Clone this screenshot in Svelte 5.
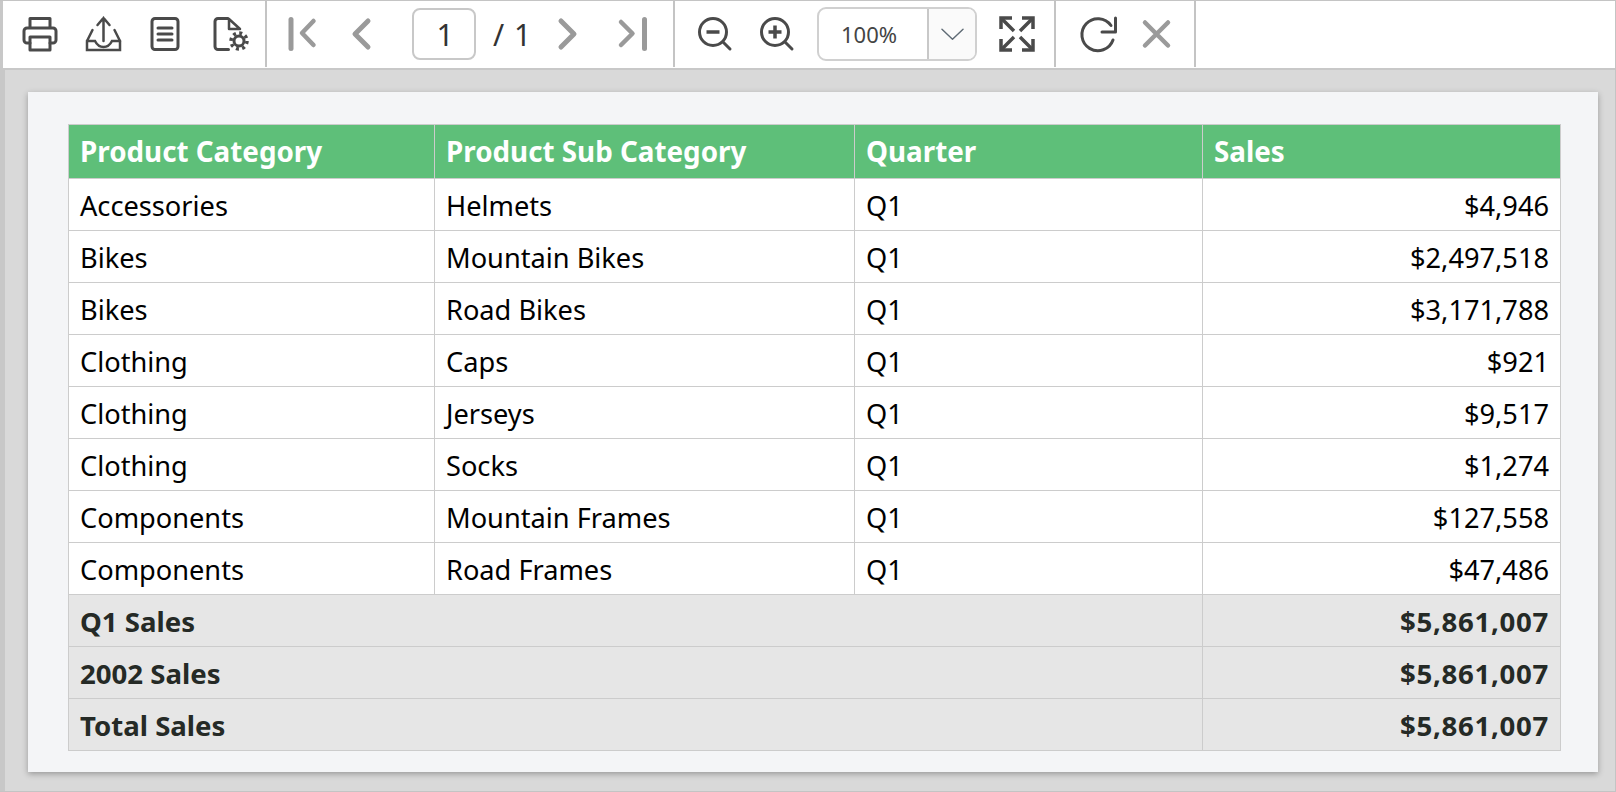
<script>
    const rows = [
        ["Accessories", "Helmets", "Q1", "$4,946"],
        ["Bikes", "Mountain Bikes", "Q1", "$2,497,518"],
        ["Bikes", "Road Bikes", "Q1", "$3,171,788"],
        ["Clothing", "Caps", "Q1", "$921"],
        ["Clothing", "Jerseys", "Q1", "$9,517"],
        ["Clothing", "Socks", "Q1", "$1,274"],
        ["Components", "Mountain Frames", "Q1", "$127,558"],
        ["Components", "Road Frames", "Q1", "$47,486"]
    ];
    const totals = ["Q1 Sales", "2002 Sales", "Total Sales"];
</script>

<div class="viewer">
    <div class="toolbar">
        <div class="group first">
            <button class="tool" aria-label="Print">
                <svg viewBox="0 0 36 36">
                    <path d="M8 12V2.500h20V12M8 27H5a3 3 0 0 1-3-3V15a3 3 0 0 1 3-3h26a3 3 0 0 1 3 3v9a3 3 0 0 1-3 3h-3" />
                    <rect x="8" y="21" width="20" height="13" />
                </svg>
            </button>
            <button class="tool" aria-label="Export">
                <svg viewBox="0 0 36 36" class="thin">
                    <path d="M3 25L8.500 14M36 25L30.500 14M3 25v9h33v-9" />
                    <path d="M3 25h8c2 4 4 6 8.500 6s6.500-2 8.500-6h8" />
                    <path d="M19.500 25V2M13.500 9l6-7 6 7" />
                </svg>
            </button>
            <button class="tool" aria-label="Page setup">
                <svg viewBox="0 0 36 36">
                    <rect x="6" y="2.500" width="26" height="31" rx="3" />
                    <path d="M12 12h14M12 18h14M12 24h14" />
                </svg>
            </button>
            <button class="tool" aria-label="Parameters">
                <svg viewBox="0 0 36 36">
                    <path d="M20 2.500H10a3 3 0 0 0-3 3v25a3 3 0 0 0 3 3h10.500" />
                    <path d="M21 3v10h11z" class="fine" />
                    <circle cx="31" cy="25" r="5" />
                    <circle cx="31" cy="25" r="8" class="teeth" />
                </svg>
            </button>
        </div>

        <div class="group pager">
            <button class="tool muted" aria-label="First page">
                <svg viewBox="0 0 36 36">
                    <path d="M8 3.500v29" class="heavy" />
                    <path d="M30.500 5L19 17l11.500 12" class="mid" />
                </svg>
            </button>
            <button class="tool muted" aria-label="Previous page">
                <svg viewBox="0 0 36 36"><path d="M23 5L10 18l13 13" class="heavy" /></svg>
            </button>
            <div class="page-input">1</div>
            <span class="page-count">/ 1</span>
            <button class="tool muted" aria-label="Next page">
                <svg viewBox="0 0 36 36"><path d="M12 5l13 13-13 13" class="heavy" /></svg>
            </button>
            <button class="tool muted" aria-label="Last page">
                <svg viewBox="0 0 36 36">
                    <path d="M33.500 3.500v29" class="heavy" />
                    <path d="M10 6l11.500 11.500L10 29" class="mid" />
                </svg>
            </button>
        </div>

        <div class="group zoom">
            <button class="tool" aria-label="Zoom out">
                <svg viewBox="0 0 36 36">
                    <circle cx="17" cy="16" r="13.500" />
                    <path d="M27 26l7 7" />
                    <path d="M10.500 16h13" class="bar" />
                </svg>
            </button>
            <button class="tool" aria-label="Zoom in">
                <svg viewBox="0 0 36 36">
                    <circle cx="17" cy="16" r="13.500" />
                    <path d="M27 26l7 7" />
                    <path d="M10.500 16h13M17 9.500v13" class="bar" />
                </svg>
            </button>
            <div class="combo">
                <span class="combo-value">100%</span>
                <span class="combo-arrow">
                    <svg viewBox="0 0 24 12"><path d="M1 1l11 10.500L23 1" /></svg>
                </span>
            </div>
            <button class="tool" aria-label="Fit page">
                <svg viewBox="0 0 36 36" class="solid">
                    <path d="M2 13V2h11M23 2h11v11M34 23v11H23M13 34H2V23" />
                    <path d="M3 3l12 12M33 3L21 15M33 33L21 21M3 33l12-12" />
                </svg>
            </button>
        </div>

        <div class="group actions">
            <button class="tool" aria-label="Refresh">
                <svg viewBox="0 0 36 36">
                    <path d="M31 9.500A16 16 0 1 0 33 24" />
                    <path d="M35.500 2v14H22" />
                </svg>
            </button>
            <button class="tool muted" aria-label="Close">
                <svg viewBox="0 0 36 36"><path d="M3 6.500l23 23M26 6.500l-23 23" class="mid" /></svg>
            </button>
        </div>
    </div>

    <div class="content">
        <div class="card">
            <table>
                <colgroup>
                    <col class="c1" />
                    <col class="c2" />
                    <col class="c3" />
                    <col />
                </colgroup>
                <thead>
                    <tr>
                        <th>Product Category</th>
                        <th>Product Sub Category</th>
                        <th>Quarter</th>
                        <th>Sales</th>
                    </tr>
                </thead>
                <tbody>
                    {#each rows as row}
                        <tr>
                            <td>{row[0]}</td>
                            <td>{row[1]}</td>
                            <td>{row[2]}</td>
                            <td class="num">{row[3]}</td>
                        </tr>
                    {/each}
                    {#each totals as label}
                        <tr class="total">
                            <td colspan="3">{label}</td>
                            <td class="num">$5,861,007</td>
                        </tr>
                    {/each}
                </tbody>
            </table>
        </div>
    </div>
</div>

<style>
    :global(body) {
        margin: 0;
        background: #d9d9d9;
    }

    .viewer {
        width: 1616px;
        height: 792px;
        box-sizing: border-box;
        display: flex;
        flex-direction: column;
        border-top: 1px solid #c4c4c4;
        border-right: 1px solid #c4c4c4;
        border-bottom: 1px solid #c4c4c4;
        font-family: "Noto Sans", "Open Sans", sans-serif;
    }

    .toolbar {
        display: flex;
        background: #fff;
        border-left: 3px solid #c8c8c8;
        border-bottom: 2px solid #c8c8c8;
        padding-bottom: 1px;
    }

    .group {
        height: 66px;
        display: flex;
        align-items: center;
        box-sizing: border-box;
        border-right: 2px solid #c4c4c4;
    }

    .first { width: 264px; padding-left: 6px; }
    .pager { width: 408px; padding-left: 3px; }
    .zoom { width: 381px; padding-left: 8px; }
    .actions { width: 140px; padding-left: 11px; }

    .tool {
        width: 62px;
        height: 36px;
        flex: none;
        padding: 0;
        border: 0;
        background: none;
        display: flex;
        justify-content: center;
        color: #4a4a4a;
    }

    .tool.muted { color: #9a9a9a; }

    svg {
        width: 36px;
        height: 36px;
        overflow: visible;
        fill: none;
        stroke: currentColor;
        stroke-width: 3;
        stroke-linecap: round;
        stroke-linejoin: round;
    }

    .thin { stroke-width: 2.5; stroke-linejoin: miter; }
    .solid { stroke-width: 3.5; stroke-linecap: butt; stroke-linejoin: miter; }
    .fine { stroke-width: 2.5; }
    .bar { stroke-width: 3.5; stroke-linecap: butt; }
    .heavy { stroke-width: 5; }
    .mid { stroke-width: 4.5; }
    .teeth { stroke-width: 3.5; stroke-dasharray: 3 3.28; stroke-linecap: butt; }

    .page-input {
        width: 64px;
        height: 52px;
        box-sizing: border-box;
        margin-left: 18px;
        padding-left: 2px;
        border: 2px solid #c8c8c8;
        border-radius: 8px;
        display: flex;
        align-items: center;
        justify-content: center;
        font-size: 30px;
        color: #333;
    }

    .page-count {
        width: 60px;
        padding-left: 17px;
        box-sizing: border-box;
        font-size: 30px;
        word-spacing: 2px;
        color: #333;
        white-space: nowrap;
    }

    .combo {
        width: 160px;
        height: 54px;
        flex: none;
        box-sizing: border-box;
        margin: 0 9px 0 10px;
        border: 2px solid #d0d0d0;
        border-radius: 9px;
        display: flex;
        overflow: hidden;
    }

    .combo-value {
        width: 108px;
        padding-left: 22px;
        box-sizing: border-box;
        line-height: 50px;
        font-size: 22px;
        color: #444;
    }

    .combo-arrow {
        flex: 1;
        border-left: 2px solid #c8c8c8;
        background: #fafafa;
        display: flex;
        align-items: center;
        justify-content: center;
    }

    .combo-arrow svg {
        width: 23px;
        height: 12px;
        stroke: #5f6b75;
        stroke-width: 1.5;
    }

    .content {
        flex: 1;
        box-sizing: border-box;
        background: #d9d9d9;
        border-left: 5px solid #c8c8c8;
        padding: 22px 17px 19px 23px;
    }

    .card {
        height: 100%;
        box-sizing: border-box;
        padding: 32px 37px 0 40px;
        background: #f4f5f7;
        box-shadow: 0 2px 6px rgba(0, 0, 0, 0.3);
    }

    table {
        width: 1493px;
        table-layout: fixed;
        border-collapse: collapse;
        font-size: 27.2px;
        color: #000;
    }

    .c1 { width: 366px; }
    .c2 { width: 420px; }
    .c3 { width: 348px; }

    th, td {
        height: 52px;
        padding: 0 11px;
        box-sizing: border-box;
        border: 1px solid #ccc;
        text-align: left;
        white-space: nowrap;
    }

    td {
        padding-top: 1px;
        background: #fff;
    }

    th {
        height: 54px;
        padding-bottom: 2px;
        background: #5ebf79;
        color: #fff;
        font-size: 27.8px;
        font-weight: 700;
    }

    .num { text-align: right; }

    .total td {
        padding-top: 0;
        background: #e6e6e6;
        color: #252a26;
        font-size: 27.6px;
        font-weight: 700;
    }

    .total .num {
        letter-spacing: 0.7px;
    }
</style>
